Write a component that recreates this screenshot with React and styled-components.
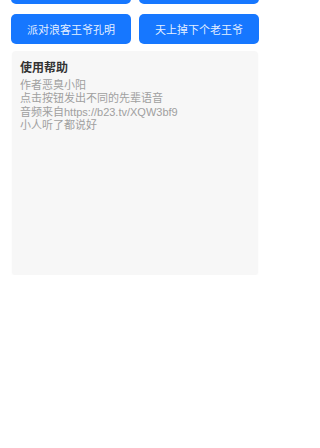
import React from 'react'
import styled, { createGlobalStyle } from 'styled-components'

const GlobalStyle = createGlobalStyle`
  html, body {
    margin: 0;
    padding: 0;
    background: #fff;
    font-family: "Liberation Sans", "Noto Sans CJK SC", sans-serif;
  }
`

const Page = styled.div`
  width: 270px;
  box-sizing: border-box;
  margin-top: -26px;
  padding: 0 11px;
`

const ButtonGrid = styled.div`
  display: grid;
  grid-template-columns: 1fr 1fr;
  column-gap: 8px;
  row-gap: 10px;
`

const SoundButton = styled.button`
  height: 30px;
  border: none;
  border-radius: 5px;
  background: #1677ff;
  color: rgba(255, 255, 255, 0.9);
  font-family: inherit;
  font-size: 11px;
  padding: 0;
  cursor: pointer;
`

const HelpCard = styled.div`
  margin: 7px 1px 0;
  min-height: 224px;
  box-sizing: border-box;
  padding: 8px 8px;
  background: #f7f7f7;
  border-radius: 4px;
  box-shadow: 0 1px 2px rgba(0, 0, 0, 0.04);
`

const HelpTitle = styled.div`
  font-size: 12px;
  line-height: 18px;
  font-weight: 700;
  color: #333;
  margin-bottom: 2px;
`

const HelpLine = styled.div`
  font-size: 11px;
  line-height: 13.4px;
  color: #a0a0a0;
`

const buttons = ['先辈语音合集', '来点先辈语录', '派对浪客王爷孔明', '天上掉下个老王爷']

const help = [
  '作者恶臭小阳',
  '点击按钮发出不同的先辈语音',
  '音频来自https://b23.tv/XQW3bf9',
  '小人听了都说好',
]

const App = () => (
  <>
    <GlobalStyle />
    <Page>
      <ButtonGrid>
        {buttons.map(b => (
          <SoundButton key={b}>{b}</SoundButton>
        ))}
      </ButtonGrid>
      <HelpCard>
        <HelpTitle>使用帮助</HelpTitle>
        {help.map(line => (
          <HelpLine key={line}>{line}</HelpLine>
        ))}
      </HelpCard>
    </Page>
  </>
)

export default App
